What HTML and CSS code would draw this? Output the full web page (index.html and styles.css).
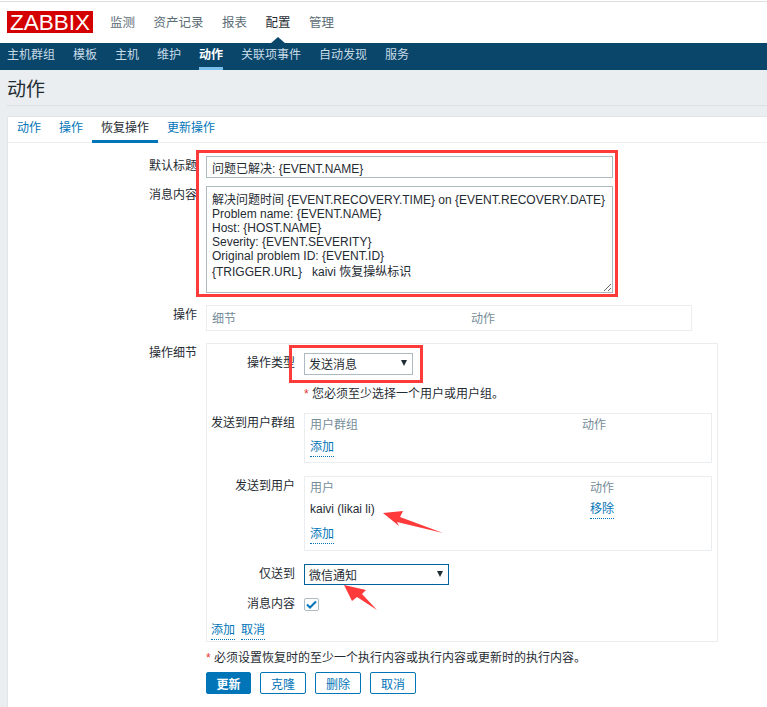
FILE: index.html
```html
<!DOCTYPE html>
<html lang="zh">
<head>
  <meta charset="UTF-8">
  <title>动作</title>
  <link rel="stylesheet" href="styles.css">
</head>
<body>
  <header class="top">
    <div class="logo">ZABBIX</div>
    <nav class="main-nav">
      <a>监测</a>
      <a>资产记录</a>
      <a>报表</a>
      <a class="current">配置</a>
      <a>管理</a>
    </nav>
  </header>
  <nav class="sub-nav">
    <a>主机群组</a>
    <a>模板</a>
    <a>主机</a>
    <a>维护</a>
    <a class="active">动作</a>
    <a>关联项事件</a>
    <a>自动发现</a>
    <a>服务</a>
  </nav>

  <main class="page">
    <h1>动作</h1>
    <div class="box">
      <div class="tabs">
        <a>动作</a>
        <a>操作</a>
        <a class="active">恢复操作</a>
        <a>更新操作</a>
      </div>

      <form class="form">
        <div class="row row-title">
          <label>默认标题</label>
          <input class="text" type="text" value="问题已解决: {EVENT.NAME}">
        </div>
        <div class="row row-msg">
          <label>消息内容</label>
          <div class="textarea">
            <div>解决问题时间 {EVENT.RECOVERY.TIME} on {EVENT.RECOVERY.DATE}</div>
            <div>Problem name: {EVENT.NAME}</div>
            <div>Host: {HOST.NAME}</div>
            <div>Severity: {EVENT.SEVERITY}</div>
            <div>Original problem ID: {EVENT.ID}</div>
            <div class="last-line">{TRIGGER.URL} &nbsp; kaivi 恢复操纵标识</div>
          </div>
        </div>
        <div class="row row-ops">
          <label>操作</label>
          <div class="ops-table">
            <span class="col-detail">细节</span>
            <span>动作</span>
          </div>
        </div>
        <div class="row row-detail">
          <label>操作细节</label>
          <div class="detail">
            <div class="inner-row">
              <label>操作类型</label>
              <div class="select short"><select><option>发送消息</option></select></div>
            </div>
            <div class="inner-row note-row">
              <span></span>
              <p class="note"><b>*</b> 您必须至少选择一个用户或用户组。</p>
            </div>
            <div class="inner-row group-row">
              <label>发送到用户群组</label>
              <div class="list list-group">
                <div class="list-head"><span>用户群组</span><span>动作</span></div>
                <div class="list-line"><a class="link">添加</a></div>
              </div>
            </div>
            <div class="inner-row user-row">
              <label>发送到用户</label>
              <div class="list list-user">
                <div class="list-head"><span>用户</span><span>动作</span></div>
                <div class="list-line"><span>kaivi (likai li)</span><a class="link">移除</a></div>
                <div class="list-line add-line"><a class="link">添加</a></div>
              </div>
            </div>
            <div class="inner-row only-row">
              <label>仅送到</label>
              <div class="select wide"><select><option>微信通知</option></select></div>
            </div>
            <div class="inner-row check-row">
              <label>消息内容</label>
              <span class="check">
                <svg width="11" height="9" viewBox="0 0 11 9"><path d="M1 4.5 4 7.5 10 1.5" fill="none" stroke="#0275b8" stroke-width="2"/></svg>
              </span>
            </div>
            <div class="detail-links"><a class="link">添加</a><a class="link">取消</a></div>
          </div>
        </div>
        <p class="note form-note"><b>*</b> 必须设置恢复时的至少一个执行内容或执行内容或更新时的执行内容。</p>
        <div class="buttons">
          <button type="button" class="primary">更新</button>
          <button type="button">克隆</button>
          <button type="button">删除</button>
          <button type="button">取消</button>
        </div>
      </form>
    </div>
  </main>

  <!-- red marks drawn on top of the screenshot -->
  <svg class="marks" width="767" height="707" viewBox="0 0 767 707">
    <rect x="197.5" y="151.5" width="419" height="144" fill="none" stroke="#fe3a3a" stroke-width="3"/>
    <rect x="290.5" y="346.5" width="131" height="35" fill="none" stroke="#fe3a3a" stroke-width="3"/>
    <polygon points="383,513 403,511 400,517 443,533 397,522 399,526" fill="#fe3a3a"/>
    <polygon points="344,585 366,590 362,594 377,610 357,597 352,601" fill="#fe3a3a"/>
  </svg>
</body>
</html>
```
FILE: styles.css
```css
* { box-sizing: border-box; }

body {
  margin: 0;
  position: relative;
  height: 707px;
  overflow: hidden;
  font-family: "Liberation Sans", "Noto Sans CJK SC", sans-serif;
  font-size: 12px;
  color: #1f2c33;
  background: #fff;
}

a { cursor: pointer; }

.top {
  height: 42px;
  margin-top: 1px;
  border-top: 1px solid #dcdfe1;
  display: flex;
  align-items: flex-start;
  padding: 9px 0 0 7px;
}

.logo {
  width: 86px;
  height: 22px;
  background: #d40000;
  color: #fff;
  font-size: 22.5px;
  line-height: 23px;
  text-align: center;
}

.main-nav {
  display: flex;
  gap: 18.5px;
  margin-left: 17px;
  font-size: 12.5px;
  line-height: 24px;
  color: #5c6d76;
}

.main-nav .current {
  position: relative;
  color: #1f2c33;
}

.main-nav .current::after {
  content: "";
  position: absolute;
  left: 4px;
  bottom: -9px;
  border: 8px solid transparent;
  border-top: 0;
  border-bottom: 7px solid #0a466a;
}

.sub-nav {
  height: 27px;
  background: #0a466a;
  display: flex;
  gap: 18px;
  padding-left: 7px;
  line-height: 24px;
  color: #c7dbe6;
}

.sub-nav .active {
  height: 27px;
  color: #fff;
  font-weight: bold;
  border-bottom: 3px solid #7ac0ec;
}

.page {
  background: #ebeef0;
  padding: 0 0 0 7px;
  height: 637px;
}

h1 {
  margin: 0;
  height: 36px;
  padding-top: 3px;
  font-size: 19px;
  font-weight: normal;
  line-height: 34px;
  border-bottom: 1px solid #dde1e4;
}

.box {
  margin-top: 10px;
  height: 591px;
  background: #fff;
  border: 1px solid #e3e6e8;
  border-right: 0;
  border-bottom: 0;
}

.tabs {
  height: 26px;
  display: flex;
  border-bottom: 1px solid #ebeef0;
  line-height: 22px;
  color: #0275b8;
}

.tabs a {
  height: 26px;
  padding: 0 9px;
}

.tabs .active {
  color: #1f2c33;
  border-bottom: 3px solid #0275b8;
}

.form { padding-top: 13px; }

.row {
  display: grid;
  grid-template-columns: 189px auto;
  column-gap: 9px;
  justify-content: start;
}

.row > label,
.inner-row > label {
  text-align: right;
  line-height: 20px;
}

.row-msg { margin-top: 8px; }
.row-msg > label { line-height: 18px; }
.row-ops { margin-top: 12px; }
.row-detail { margin-top: 12px; }

.text {
  width: 407px;
  height: 22px;
  padding: 0 5px;
  border: 1px solid #acbbc2;
  font: inherit;
  color: inherit;
}

.textarea {
  width: 407px;
  height: 107px;
  padding: 6px 5px 0;
  border: 1px solid #acbbc2;
  line-height: 14px;
  white-space: nowrap;
  overflow: hidden;
  resize: both;
}

.textarea .last-line { margin-top: 2px; }

.ops-table {
  width: 486px;
  height: 26px;
  display: flex;
  padding: 5px 5px 0;
  border: 1px solid #ebeef0;
  line-height: 17px;
  color: #768d99;
}

.col-detail { width: 259px; }

.detail {
  width: 512px;
  height: 299px;
  padding-top: 9px;
  border: 1px solid #ebeef0;
}

.inner-row {
  display: grid;
  grid-template-columns: 88px auto;
  column-gap: 9px;
  justify-content: start;
}

.select { position: relative; height: 22px; }
.select.short { width: 109px; }
.select.wide { width: 145px; height: 21px; }

.select select {
  appearance: none;
  width: 100%;
  height: 100%;
  padding: 2px 4px 0;
  border: 1px solid #acbbc2;
  border-radius: 0;
  background: #fff;
  font: inherit;
  color: inherit;
}

.select.wide select { border-color: #00649c; }

.select::after {
  content: "";
  position: absolute;
  right: 6px;
  top: 7px;
  border: 3px solid transparent;
  border-bottom: 0;
  border-top: 6px solid #1f2c33;
}

.note-row { margin-top: 10px; }

.note {
  margin: 0;
  line-height: 18px;
}

.note b {
  font-weight: normal;
  color: #e33734;
}

.group-row { margin-top: 10px; }
.user-row { margin-top: 13px; }
.only-row { margin-top: 13px; }
.check-row { margin-top: 13px; }
.check-row > label { line-height: 12px; }

.list {
  width: 408px;
  padding: 3px 5px;
  border: 1px solid #ebeef0;
  line-height: 17px;
}

.list-group { height: 50px; }
.list-group .list-line { margin-top: 5px; }
.list-user { height: 75px; }

.list-head,
.list-line {
  display: flex;
}

.list-head {
  color: #768d99;
  margin-bottom: 4px;
}

.list-head span:first-child,
.list-line span:first-child {
  width: 280px;
}

.list-group .list-head span:first-child { width: 272px; }

.add-line { margin-top: 7px; }

.link {
  color: #0275b8;
  border-bottom: 1px dotted #0275b8;
}

.check {
  width: 15px;
  height: 13px;
  display: flex;
  align-items: center;
  justify-content: center;
  border: 1px solid #acbbc2;
  border-radius: 2px;
}

.detail-links {
  display: flex;
  gap: 6px;
  margin: 11px 0 0 4px;
  line-height: 17px;
}

.form-note {
  margin: 7px 0 0 198px;
}

.buttons {
  display: flex;
  gap: 9px;
  margin: 5px 0 0 198px;
}

button {
  width: 46px;
  height: 22px;
  padding: 0;
  background: #fff;
  border: 1px solid #0275b8;
  border-radius: 2px;
  color: #0275b8;
  font: inherit;
}

button.primary {
  width: 45px;
  background: #0275b8;
  color: #fff;
  font-weight: bold;
}

.marks {
  position: absolute;
  left: 0;
  top: 0;
  pointer-events: none;
}
```
